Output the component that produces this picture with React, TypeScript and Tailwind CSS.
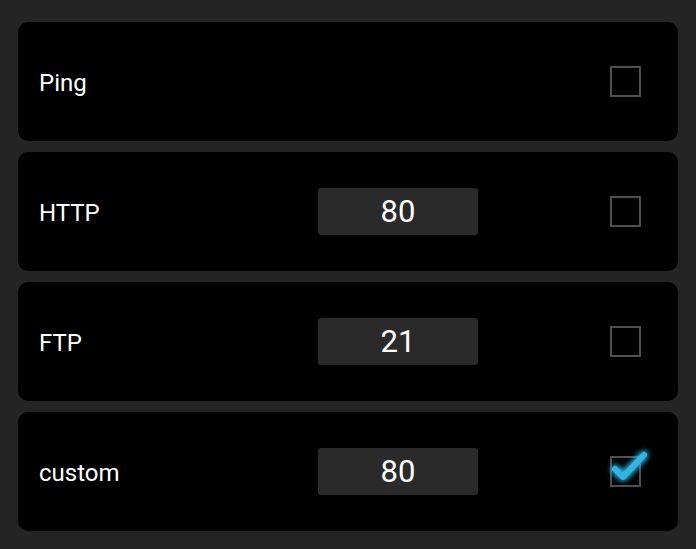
const rows = [
  { id: "ping", label: "Ping", port: null as string | null, checked: false },
  { id: "http", label: "HTTP", port: "80", checked: false },
  { id: "ftp", label: "FTP", port: "21", checked: false },
  { id: "custom", label: "custom", port: "80", checked: true },
];

function CheckBox({ checked }: { checked: boolean }) {
  return (
    <div className="relative h-[31px] w-[31px] border-2 border-[#4f4f4f]">
      {checked && (
        <svg
          className="absolute -left-[4px] -top-[12px] h-[40px] w-[44px] overflow-visible"
          viewBox="0 0 44 40"
        >
          <defs>
            <filter id="glow" x="-50%" y="-50%" width="200%" height="200%">
              <feGaussianBlur stdDeviation="3" result="b" />
              <feMerge>
                <feMergeNode in="b" />
                <feMergeNode in="b" />
                <feMergeNode in="SourceGraphic" />
              </feMerge>
            </filter>
          </defs>
          <path
            d="M7 23 L15 31 L36 9"
            fill="none"
            stroke="#33b5e5"
            strokeWidth="6"
            strokeLinecap="round"
            strokeLinejoin="round"
            filter="url(#glow)"
          />
        </svg>
      )}
    </div>
  );
}

export default function App() {
  return (
    <div
      className="flex h-[549px] w-[696px] flex-col gap-[11px] bg-[#242424] px-[18px] pb-[18px] pt-[22px]"
      style={{ fontFamily: "Roboto, 'Noto Sans', sans-serif" }}
    >
      {rows.map((row) => (
        <div
          key={row.id}
          className="flex h-[119px] items-center rounded-[10px] bg-black pl-[21px] pr-[37px]"
        >
          <div className="w-[279px] pt-[3px] text-[24px] leading-none text-white">
            {row.label}
          </div>
          <div className="w-[160px]">
            {row.port && (
              <div className="flex h-[47px] items-center justify-center rounded-[3px] bg-[#2a2a2a] text-[31px] leading-none text-white">
                {row.port}
              </div>
            )}
          </div>
          <div className="flex-1" />
          <CheckBox checked={row.checked} />
        </div>
      ))}
    </div>
  );
}
